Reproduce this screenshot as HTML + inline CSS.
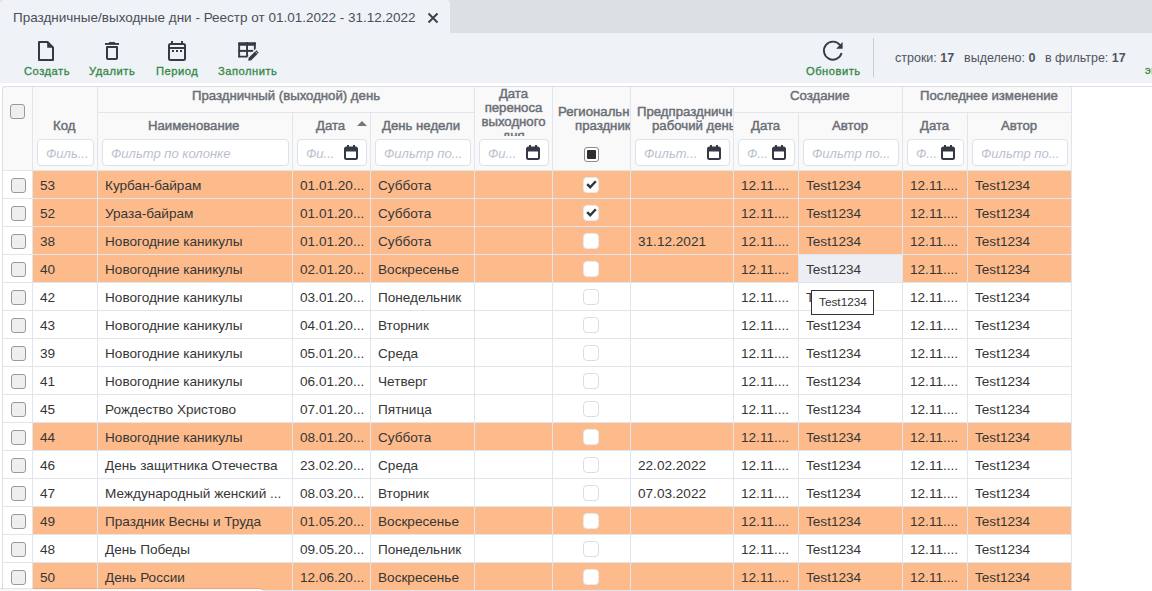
<!DOCTYPE html><html><head><meta charset="utf-8"><style>
html,body{margin:0;padding:0;}
body{width:1152px;height:591px;overflow:hidden;position:relative;background:#fff;font-family:"Liberation Sans", sans-serif;}
.a{position:absolute;white-space:nowrap;}
.lbl{position:absolute;font-size:11.2px;letter-spacing:0.5px;font-weight:normal;-webkit-text-stroke:0.3px #338844;color:#338844;white-space:nowrap;line-height:13px;}
.ht{position:absolute;font-size:13.2px;font-weight:normal;-webkit-text-stroke:0.45px #6a6e76;color:#6a6e76;white-space:nowrap;line-height:14px;}
.flt{position:absolute;top:139px;height:25px;border:1px solid #dde1ea;border-radius:4px;background:#fff;overflow:hidden;}
.ph{position:absolute;left:8px;top:6px;font-size:13px;font-style:italic;color:#bac1cd;white-space:nowrap;line-height:15px;}
.vl{position:absolute;width:1px;background:#e3e5ec;}
.hl{position:absolute;height:1px;background:#e3e5ec;}
.c{position:absolute;font-size:13.6px;color:#363636;white-space:nowrap;line-height:16px;}
.cb{position:absolute;width:13px;height:13px;border:1px solid #999;border-radius:3px;background:#efefef;}
.rb{position:absolute;width:14px;height:14px;border:1px solid #d9dde4;border-radius:4px;background:#fff;}
</style></head><body>
<div class="a" style="left:0;top:0;width:1152px;height:33px;background:#dcdfe4;"></div>
<div class="a" style="left:0;top:0;width:450px;height:33px;background:#eff2f7;border-radius:4px 4px 0 0;"></div>
<div class="a" style="left:13px;top:10px;font-size:13.5px;color:#4b4f57;line-height:16px;">Праздничные/выходные дни - Реестр от 01.01.2022 - 31.12.2022</div>
<svg class="a" style="left:427px;top:12px" width="12" height="12" viewBox="0 0 12 12"><path d="M1.5 1.5L10.5 10.5M10.5 1.5L1.5 10.5" stroke="#3b3f47" stroke-width="1.9"/></svg>
<div class="a" style="left:0;top:33px;width:1152px;height:50px;background:#eff2f7;"></div>
<svg class="a" style="left:37px;top:40px" width="18" height="22" viewBox="0 0 18 22"><path d="M2 2H10.5L16 7.5V20H2Z" fill="none" stroke="#353a45" stroke-width="2" stroke-linejoin="round"/><path d="M10.2 1.2L16.8 7.8H10.2Z" fill="#353a45"/></svg>
<svg class="a" style="left:104px;top:40px" width="16" height="21" viewBox="0 0 16 21"><rect x="1" y="3" width="14" height="1.9" fill="#353a45"/><rect x="5" y="2.1" width="6" height="1.5" rx="0.5" fill="#353a45"/><path d="M3 7H13V18Q13 19 12 19H4Q3 19 3 18Z" fill="none" stroke="#353a45" stroke-width="2" stroke-linejoin="round"/></svg>
<svg class="a" style="left:167px;top:40px" width="20" height="22" viewBox="0 0 20 22"><rect x="2" y="4" width="16" height="16" rx="1.5" fill="none" stroke="#353a45" stroke-width="2"/><rect x="2" y="7" width="16" height="2" fill="#353a45"/><rect x="4" y="1" width="2" height="4" fill="#353a45"/><rect x="14" y="1" width="2" height="4" fill="#353a45"/><rect x="5" y="10" width="2" height="2" fill="#353a45"/><rect x="9" y="10" width="2" height="2" fill="#353a45"/><rect x="13" y="10" width="2" height="2" fill="#353a45"/></svg>
<svg class="a" style="left:234px;top:38px" width="28" height="26" viewBox="0 0 28 26"><g fill="#353a45"><rect x="4.2" y="4.2" width="17.6" height="3.6" rx="1.5"/><rect x="4.2" y="4.2" width="1.9" height="15.4" rx="1"/><rect x="4.2" y="17.8" width="12.8" height="1.8" rx="0.9"/><rect x="12.1" y="4.2" width="1.9" height="15.4"/><rect x="4.2" y="11.9" width="15" height="2"/><rect x="19.9" y="4.2" width="1.9" height="8"/></g><line x1="13.5" y1="23.5" x2="25" y2="12" stroke="#eff2f7" stroke-width="6.5"/><path d="M14.2,22.8 L14.76,19.76 L22.26,12.26 L24.74,14.74 L17.24,22.24 Z" fill="#353a45"/><line x1="21.2" y1="13.4" x2="23.6" y2="15.8" stroke="#eff2f7" stroke-width="0.8"/></svg>
<svg class="a" style="left:822px;top:40px" width="22" height="22" viewBox="0 0 22 22"><path d="M19.59 13.03A9 9 0 1 1 18.0 5.1" fill="none" stroke="#353a45" stroke-width="1.9"/><path d="M20.6 1.9L20.6 8.8L14.2 8.8Z" fill="#353a45"/></svg>
<div class="lbl" style="left:24px;top:65px;">Создать</div>
<div class="lbl" style="left:89px;top:65px;">Удалить</div>
<div class="lbl" style="left:156px;top:65px;">Период</div>
<div class="lbl" style="left:218px;top:65px;">Заполнить</div>
<div class="lbl" style="left:806px;top:65px;">Обновить</div>
<div class="lbl" style="left:1145px;top:64px;">экспорт</div>
<div class="a" style="left:873px;top:38px;width:1px;height:39px;background:#c9ccd2;"></div>
<div class="a" style="left:895px;top:51px;font-size:12.5px;color:#50555e;line-height:15px;">строки: <b>17</b></div>
<div class="a" style="left:964px;top:51px;font-size:12.5px;color:#50555e;line-height:15px;">выделено: <b>0</b></div>
<div class="a" style="left:1045px;top:51px;font-size:12.5px;color:#50555e;line-height:15px;">в фильтре: <b>17</b></div>
<div class="a" style="left:2px;top:86px;width:1152px;height:84px;background:#f9f9f9;border-top:1px solid #dcdfe8;border-left:1px solid #dcdfe8;border-radius:3px 0 0 0;"></div>
<div class="a" style="left:1072px;top:87px;width:80px;height:84px;background:#fff;"></div>
<div class="a" style="left:33px;top:171px;width:1038px;height:27px;background:#fdbb8b;"></div>
<div class="cb" style="left:11px;top:178px;"></div>
<div class="c" style="left:40px;top:178px;">53</div>
<div class="c" style="left:105px;top:178px;">Курбан-байрам</div>
<div class="c" style="left:300px;top:178px;">01.01.20...</div>
<div class="c" style="left:378px;top:178px;">Суббота</div>
<div class="c" style="left:741px;top:178px;">12.11....</div>
<div class="c" style="left:806px;top:178px;">Test1234</div>
<div class="c" style="left:910px;top:178px;">12.11....</div>
<div class="c" style="left:975px;top:178px;">Test1234</div>
<div class="rb" style="left:583px;top:177px;border-color:#e6e9ef;"></div>
<svg class="a" style="left:586px;top:180px" width="11" height="9" viewBox="0 0 11 9"><path d="M1.2 4.2L4.2 7.2L9.8 1.2" fill="none" stroke="#333" stroke-width="2.4"/></svg>
<div class="a" style="left:33px;top:199px;width:1038px;height:27px;background:#fdbb8b;"></div>
<div class="cb" style="left:11px;top:206px;"></div>
<div class="c" style="left:40px;top:206px;">52</div>
<div class="c" style="left:105px;top:206px;">Ураза-байрам</div>
<div class="c" style="left:300px;top:206px;">01.01.20...</div>
<div class="c" style="left:378px;top:206px;">Суббота</div>
<div class="c" style="left:741px;top:206px;">12.11....</div>
<div class="c" style="left:806px;top:206px;">Test1234</div>
<div class="c" style="left:910px;top:206px;">12.11....</div>
<div class="c" style="left:975px;top:206px;">Test1234</div>
<div class="rb" style="left:583px;top:205px;border-color:#e6e9ef;"></div>
<svg class="a" style="left:586px;top:208px" width="11" height="9" viewBox="0 0 11 9"><path d="M1.2 4.2L4.2 7.2L9.8 1.2" fill="none" stroke="#333" stroke-width="2.4"/></svg>
<div class="a" style="left:33px;top:227px;width:1038px;height:27px;background:#fdbb8b;"></div>
<div class="cb" style="left:11px;top:234px;"></div>
<div class="c" style="left:40px;top:234px;">38</div>
<div class="c" style="left:105px;top:234px;">Новогодние каникулы</div>
<div class="c" style="left:300px;top:234px;">01.01.20...</div>
<div class="c" style="left:378px;top:234px;">Суббота</div>
<div class="c" style="left:638px;top:234px;">31.12.2021</div>
<div class="c" style="left:741px;top:234px;">12.11....</div>
<div class="c" style="left:806px;top:234px;">Test1234</div>
<div class="c" style="left:910px;top:234px;">12.11....</div>
<div class="c" style="left:975px;top:234px;">Test1234</div>
<div class="rb" style="left:583px;top:233px;border-color:#e6e9ef;"></div>
<div class="a" style="left:33px;top:255px;width:1038px;height:27px;background:#fdbb8b;"></div>
<div class="a" style="left:799px;top:255px;width:103px;height:27px;background:#eceef3;"></div>
<div class="cb" style="left:11px;top:262px;"></div>
<div class="c" style="left:40px;top:262px;">40</div>
<div class="c" style="left:105px;top:262px;">Новогодние каникулы</div>
<div class="c" style="left:300px;top:262px;">02.01.20...</div>
<div class="c" style="left:378px;top:262px;">Воскресенье</div>
<div class="c" style="left:741px;top:262px;">12.11....</div>
<div class="c" style="left:806px;top:262px;">Test1234</div>
<div class="c" style="left:910px;top:262px;">12.11....</div>
<div class="c" style="left:975px;top:262px;">Test1234</div>
<div class="rb" style="left:583px;top:261px;border-color:#e6e9ef;"></div>
<div class="cb" style="left:11px;top:290px;"></div>
<div class="c" style="left:40px;top:290px;">42</div>
<div class="c" style="left:105px;top:290px;">Новогодние каникулы</div>
<div class="c" style="left:300px;top:290px;">03.01.20...</div>
<div class="c" style="left:378px;top:290px;">Понедельник</div>
<div class="c" style="left:741px;top:290px;">12.11....</div>
<div class="c" style="left:806px;top:290px;">Test1234</div>
<div class="c" style="left:910px;top:290px;">12.11....</div>
<div class="c" style="left:975px;top:290px;">Test1234</div>
<div class="rb" style="left:583px;top:289px;"></div>
<div class="cb" style="left:11px;top:318px;"></div>
<div class="c" style="left:40px;top:318px;">43</div>
<div class="c" style="left:105px;top:318px;">Новогодние каникулы</div>
<div class="c" style="left:300px;top:318px;">04.01.20...</div>
<div class="c" style="left:378px;top:318px;">Вторник</div>
<div class="c" style="left:741px;top:318px;">12.11....</div>
<div class="c" style="left:806px;top:318px;">Test1234</div>
<div class="c" style="left:910px;top:318px;">12.11....</div>
<div class="c" style="left:975px;top:318px;">Test1234</div>
<div class="rb" style="left:583px;top:317px;"></div>
<div class="cb" style="left:11px;top:346px;"></div>
<div class="c" style="left:40px;top:346px;">39</div>
<div class="c" style="left:105px;top:346px;">Новогодние каникулы</div>
<div class="c" style="left:300px;top:346px;">05.01.20...</div>
<div class="c" style="left:378px;top:346px;">Среда</div>
<div class="c" style="left:741px;top:346px;">12.11....</div>
<div class="c" style="left:806px;top:346px;">Test1234</div>
<div class="c" style="left:910px;top:346px;">12.11....</div>
<div class="c" style="left:975px;top:346px;">Test1234</div>
<div class="rb" style="left:583px;top:345px;"></div>
<div class="cb" style="left:11px;top:374px;"></div>
<div class="c" style="left:40px;top:374px;">41</div>
<div class="c" style="left:105px;top:374px;">Новогодние каникулы</div>
<div class="c" style="left:300px;top:374px;">06.01.20...</div>
<div class="c" style="left:378px;top:374px;">Четверг</div>
<div class="c" style="left:741px;top:374px;">12.11....</div>
<div class="c" style="left:806px;top:374px;">Test1234</div>
<div class="c" style="left:910px;top:374px;">12.11....</div>
<div class="c" style="left:975px;top:374px;">Test1234</div>
<div class="rb" style="left:583px;top:373px;"></div>
<div class="cb" style="left:11px;top:402px;"></div>
<div class="c" style="left:40px;top:402px;">45</div>
<div class="c" style="left:105px;top:402px;">Рождество Христово</div>
<div class="c" style="left:300px;top:402px;">07.01.20...</div>
<div class="c" style="left:378px;top:402px;">Пятница</div>
<div class="c" style="left:741px;top:402px;">12.11....</div>
<div class="c" style="left:806px;top:402px;">Test1234</div>
<div class="c" style="left:910px;top:402px;">12.11....</div>
<div class="c" style="left:975px;top:402px;">Test1234</div>
<div class="rb" style="left:583px;top:401px;"></div>
<div class="a" style="left:33px;top:423px;width:1038px;height:27px;background:#fdbb8b;"></div>
<div class="cb" style="left:11px;top:430px;"></div>
<div class="c" style="left:40px;top:430px;">44</div>
<div class="c" style="left:105px;top:430px;">Новогодние каникулы</div>
<div class="c" style="left:300px;top:430px;">08.01.20...</div>
<div class="c" style="left:378px;top:430px;">Суббота</div>
<div class="c" style="left:741px;top:430px;">12.11....</div>
<div class="c" style="left:806px;top:430px;">Test1234</div>
<div class="c" style="left:910px;top:430px;">12.11....</div>
<div class="c" style="left:975px;top:430px;">Test1234</div>
<div class="rb" style="left:583px;top:429px;border-color:#e6e9ef;"></div>
<div class="cb" style="left:11px;top:458px;"></div>
<div class="c" style="left:40px;top:458px;">46</div>
<div class="c" style="left:105px;top:458px;">День защитника Отечества</div>
<div class="c" style="left:300px;top:458px;">23.02.20...</div>
<div class="c" style="left:378px;top:458px;">Среда</div>
<div class="c" style="left:638px;top:458px;">22.02.2022</div>
<div class="c" style="left:741px;top:458px;">12.11....</div>
<div class="c" style="left:806px;top:458px;">Test1234</div>
<div class="c" style="left:910px;top:458px;">12.11....</div>
<div class="c" style="left:975px;top:458px;">Test1234</div>
<div class="rb" style="left:583px;top:457px;"></div>
<div class="cb" style="left:11px;top:486px;"></div>
<div class="c" style="left:40px;top:486px;">47</div>
<div class="c" style="left:105px;top:486px;">Международный женский ...</div>
<div class="c" style="left:300px;top:486px;">08.03.20...</div>
<div class="c" style="left:378px;top:486px;">Вторник</div>
<div class="c" style="left:638px;top:486px;">07.03.2022</div>
<div class="c" style="left:741px;top:486px;">12.11....</div>
<div class="c" style="left:806px;top:486px;">Test1234</div>
<div class="c" style="left:910px;top:486px;">12.11....</div>
<div class="c" style="left:975px;top:486px;">Test1234</div>
<div class="rb" style="left:583px;top:485px;"></div>
<div class="a" style="left:33px;top:507px;width:1038px;height:27px;background:#fdbb8b;"></div>
<div class="cb" style="left:11px;top:514px;"></div>
<div class="c" style="left:40px;top:514px;">49</div>
<div class="c" style="left:105px;top:514px;">Праздник Весны и Труда</div>
<div class="c" style="left:300px;top:514px;">01.05.20...</div>
<div class="c" style="left:378px;top:514px;">Воскресенье</div>
<div class="c" style="left:741px;top:514px;">12.11....</div>
<div class="c" style="left:806px;top:514px;">Test1234</div>
<div class="c" style="left:910px;top:514px;">12.11....</div>
<div class="c" style="left:975px;top:514px;">Test1234</div>
<div class="rb" style="left:583px;top:513px;border-color:#e6e9ef;"></div>
<div class="cb" style="left:11px;top:542px;"></div>
<div class="c" style="left:40px;top:542px;">48</div>
<div class="c" style="left:105px;top:542px;">День Победы</div>
<div class="c" style="left:300px;top:542px;">09.05.20...</div>
<div class="c" style="left:378px;top:542px;">Понедельник</div>
<div class="c" style="left:741px;top:542px;">12.11....</div>
<div class="c" style="left:806px;top:542px;">Test1234</div>
<div class="c" style="left:910px;top:542px;">12.11....</div>
<div class="c" style="left:975px;top:542px;">Test1234</div>
<div class="rb" style="left:583px;top:541px;"></div>
<div class="a" style="left:33px;top:563px;width:1038px;height:27px;background:#fdbb8b;"></div>
<div class="cb" style="left:11px;top:570px;"></div>
<div class="c" style="left:40px;top:570px;">50</div>
<div class="c" style="left:105px;top:570px;">День России</div>
<div class="c" style="left:300px;top:570px;">12.06.20...</div>
<div class="c" style="left:378px;top:570px;">Воскресенье</div>
<div class="c" style="left:741px;top:570px;">12.11....</div>
<div class="c" style="left:806px;top:570px;">Test1234</div>
<div class="c" style="left:910px;top:570px;">12.11....</div>
<div class="c" style="left:975px;top:570px;">Test1234</div>
<div class="rb" style="left:583px;top:569px;border-color:#e6e9ef;"></div>
<div class="hl" style="left:2px;top:170px;width:1069px;"></div>
<div class="hl" style="left:2px;top:198px;width:1069px;"></div>
<div class="hl" style="left:2px;top:226px;width:1069px;"></div>
<div class="hl" style="left:2px;top:254px;width:1069px;"></div>
<div class="hl" style="left:2px;top:282px;width:1069px;"></div>
<div class="hl" style="left:2px;top:310px;width:1069px;"></div>
<div class="hl" style="left:2px;top:338px;width:1069px;"></div>
<div class="hl" style="left:2px;top:366px;width:1069px;"></div>
<div class="hl" style="left:2px;top:394px;width:1069px;"></div>
<div class="hl" style="left:2px;top:422px;width:1069px;"></div>
<div class="hl" style="left:2px;top:450px;width:1069px;"></div>
<div class="hl" style="left:2px;top:478px;width:1069px;"></div>
<div class="hl" style="left:2px;top:506px;width:1069px;"></div>
<div class="hl" style="left:2px;top:534px;width:1069px;"></div>
<div class="hl" style="left:2px;top:562px;width:1069px;"></div>
<div class="hl" style="left:2px;top:590px;width:1069px;"></div>
<div class="hl" style="left:97px;top:112px;width:377px;"></div>
<div class="hl" style="left:733px;top:112px;width:338px;"></div>
<div class="vl" style="left:32px;top:87px;height:504px;"></div>
<div class="vl" style="left:97px;top:87px;height:504px;"></div>
<div class="vl" style="left:292px;top:112px;height:479px;"></div>
<div class="vl" style="left:370px;top:112px;height:479px;"></div>
<div class="vl" style="left:474px;top:87px;height:504px;"></div>
<div class="vl" style="left:552px;top:87px;height:504px;"></div>
<div class="vl" style="left:630px;top:87px;height:504px;"></div>
<div class="vl" style="left:733px;top:87px;height:504px;"></div>
<div class="vl" style="left:798px;top:112px;height:479px;"></div>
<div class="vl" style="left:902px;top:87px;height:504px;"></div>
<div class="vl" style="left:967px;top:112px;height:479px;"></div>
<div class="vl" style="left:1071px;top:87px;height:504px;"></div>
<div class="vl" style="left:2px;top:90px;height:501px;background:#dcdfe8;"></div>
<div class="cb" style="left:10px;top:104px;"></div>
<div class="ht" style="left:192px;top:89px;">Праздничный (выходной) день</div>
<div class="ht" style="left:790px;top:89px;">Создание</div>
<div class="ht" style="left:920px;top:89px;">Последнее изменение</div>
<div class="ht" style="left:53px;top:119px;">Код</div>
<div class="ht" style="left:148px;top:119px;">Наименование</div>
<div class="ht" style="left:316px;top:119px;">Дата</div>
<div class="ht" style="left:382px;top:119px;">День недели</div>
<div class="ht" style="left:751px;top:119px;">Дата</div>
<div class="ht" style="left:832px;top:119px;">Автор</div>
<div class="ht" style="left:920px;top:119px;">Дата</div>
<div class="ht" style="left:1001px;top:119px;">Автор</div>
<svg class="a" style="left:357px;top:121px" width="10" height="5" viewBox="0 0 10 5"><path d="M0 5L5 0L10 5Z" fill="#777"/></svg>
<div class="a" style="left:475px;top:87px;width:77px;height:49px;overflow:hidden;"><div class="ht" style="position:static;white-space:normal;text-align:center;line-height:14px;padding-top:0px;">Дата<br>переноса<br>выходного<br>дня</div></div>
<div class="a" style="left:553px;top:104px;width:77px;height:32px;overflow:hidden;"><div class="ht" style="left:5px;top:1px;">Региональн</div><div class="ht" style="left:22px;top:15px;">праздник</div></div>
<div class="a" style="left:631px;top:104px;width:102px;height:32px;overflow:hidden;"><div class="ht" style="left:6px;top:1px;">Предпраздничн</div><div class="ht" style="left:21px;top:15px;">рабочий день</div></div>
<div class="flt" style="left:37px;width:55px;"><div class="ph">Филь...</div>
</div>
<div class="flt" style="left:102px;width:185px;"><div class="ph">Фильтр по колонке</div>
</div>
<div class="flt" style="left:297px;width:68px;"><div class="ph">Фи...</div>
<svg width="14" height="15" viewBox="0 0 14 15" style="position:absolute;left:46px;top:5px;"><rect x="1" y="2.5" width="12" height="11.5" rx="1.5" fill="none" stroke="#343a45" stroke-width="2"/><rect x="1" y="2" width="12" height="4.5" fill="#343a45"/><rect x="3" y="0" width="2" height="3" fill="#343a45"/><rect x="9" y="0" width="2" height="3" fill="#343a45"/></svg>
</div>
<div class="flt" style="left:375px;width:94px;"><div class="ph">Фильтр по...</div>
</div>
<div class="flt" style="left:479px;width:68px;"><div class="ph">Фи...</div>
<svg width="14" height="15" viewBox="0 0 14 15" style="position:absolute;left:46px;top:5px;"><rect x="1" y="2.5" width="12" height="11.5" rx="1.5" fill="none" stroke="#343a45" stroke-width="2"/><rect x="1" y="2" width="12" height="4.5" fill="#343a45"/><rect x="3" y="0" width="2" height="3" fill="#343a45"/><rect x="9" y="0" width="2" height="3" fill="#343a45"/></svg>
</div>
<div class="flt" style="left:635px;width:93px;"><div class="ph">Фильт...</div>
<svg width="14" height="15" viewBox="0 0 14 15" style="position:absolute;left:71px;top:5px;"><rect x="1" y="2.5" width="12" height="11.5" rx="1.5" fill="none" stroke="#343a45" stroke-width="2"/><rect x="1" y="2" width="12" height="4.5" fill="#343a45"/><rect x="3" y="0" width="2" height="3" fill="#343a45"/><rect x="9" y="0" width="2" height="3" fill="#343a45"/></svg>
</div>
<div class="flt" style="left:738px;width:55px;"><div class="ph">Ф...</div>
<svg width="14" height="15" viewBox="0 0 14 15" style="position:absolute;left:33px;top:5px;"><rect x="1" y="2.5" width="12" height="11.5" rx="1.5" fill="none" stroke="#343a45" stroke-width="2"/><rect x="1" y="2" width="12" height="4.5" fill="#343a45"/><rect x="3" y="0" width="2" height="3" fill="#343a45"/><rect x="9" y="0" width="2" height="3" fill="#343a45"/></svg>
</div>
<div class="flt" style="left:803px;width:94px;"><div class="ph">Фильтр по...</div>
</div>
<div class="flt" style="left:907px;width:55px;"><div class="ph">Ф...</div>
<svg width="14" height="15" viewBox="0 0 14 15" style="position:absolute;left:33px;top:5px;"><rect x="1" y="2.5" width="12" height="11.5" rx="1.5" fill="none" stroke="#343a45" stroke-width="2"/><rect x="1" y="2" width="12" height="4.5" fill="#343a45"/><rect x="3" y="0" width="2" height="3" fill="#343a45"/><rect x="9" y="0" width="2" height="3" fill="#343a45"/></svg>
</div>
<div class="flt" style="left:972px;width:94px;"><div class="ph">Фильтр по...</div>
</div>
<div class="a" style="left:584px;top:147px;width:13px;height:13px;border:1px solid #8a8a8a;border-radius:3px;background:#fff;"></div>
<div class="a" style="left:587px;top:150px;width:9px;height:9px;background:#2e2e2e;border-radius:1px;"></div>
<div class="a" style="left:811px;top:290px;width:61px;height:23px;border:1px solid #333;background:#fff;"></div>
<div class="a" style="left:819px;top:295px;font-size:11.8px;color:#333;line-height:14px;">Test1234</div>
<div class="a" style="left:0;top:589px;width:262px;height:2px;background:#f7f8fa;border-radius:0 3px 0 0;box-shadow:0 -1px 0 rgba(0,0,0,0.1);"></div>
</body></html>
